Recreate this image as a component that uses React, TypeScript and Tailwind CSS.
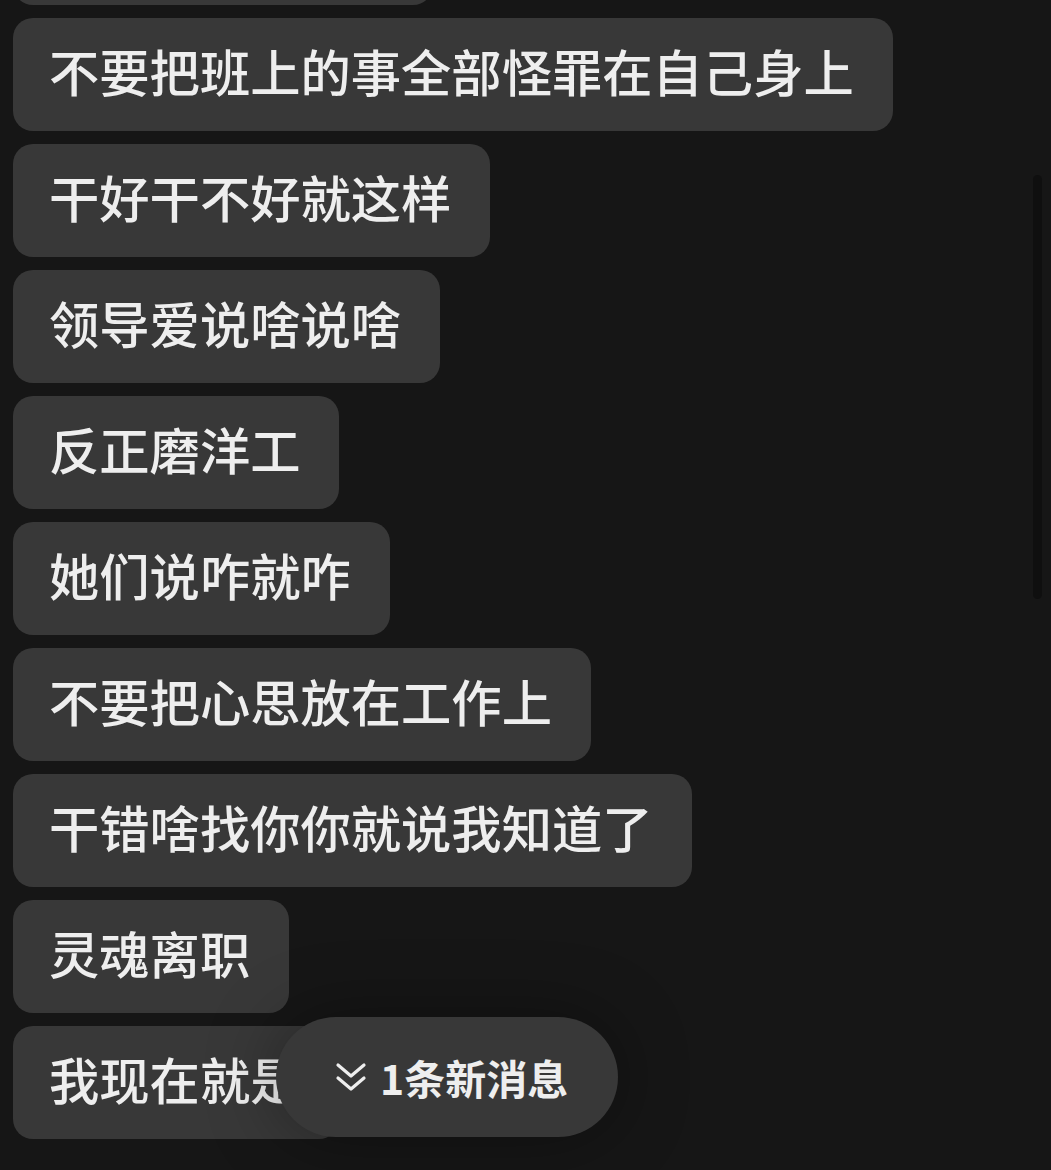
const messages = [
  '不要把班上的事全部怪罪在自己身上',
  '干好干不好就这样',
  '领导爱说啥说啥',
  '反正磨洋工',
  '她们说咋就咋',
  '不要把心思放在工作上',
  '干错啥找你你就说我知道了',
  '灵魂离职',
  '我现在就是',
];

export default function App() {
  return (
    <div
      className="relative w-[1051px] h-[1170px] overflow-hidden bg-[#161616] text-[#eeeeee]"
      style={{ fontFamily: '"Noto Sans CJK SC", "Noto Sans", sans-serif' }}
    >
      <div className="flex flex-col items-start gap-[13px] pl-[13px] -mt-[108px]">
        {/* previous message, scrolled off the top */}
        <div className="w-[420px] h-[113px] rounded-[20px] bg-[#383838]" />
        {messages.map((m, i) => (
          <div
            key={i}
            className="flex items-center h-[113px] pl-[36px] pr-[39px] pb-[8px] rounded-[20px] bg-[#383838] text-[50.3px] leading-none font-medium whitespace-nowrap"
          >
            {m}
          </div>
        ))}
      </div>

      {/* scrollbar */}
      <div className="absolute left-[1033px] top-[175px] w-[9px] h-[424px] rounded-full bg-[#0f0f0f]" />

      {/* new message pill */}
      <div className="absolute left-[276px] top-[1017px] w-[342px] h-[120px] rounded-full bg-[#383838] shadow-[0_0_70px_rgba(0,0,0,0.35)] flex items-center pl-[59px] gap-[13px]">
        <svg width="32" height="32" viewBox="0 0 32 32" fill="none" stroke="#eeeeee" strokeWidth="3.2" strokeLinecap="round" strokeLinejoin="round">
          <polyline points="3 4 16 15 29 4" />
          <polyline points="3 17 16 28 29 17" />
        </svg>
        <span className="text-[41px] leading-none font-bold">1条新消息</span>
      </div>
    </div>
  );
}
